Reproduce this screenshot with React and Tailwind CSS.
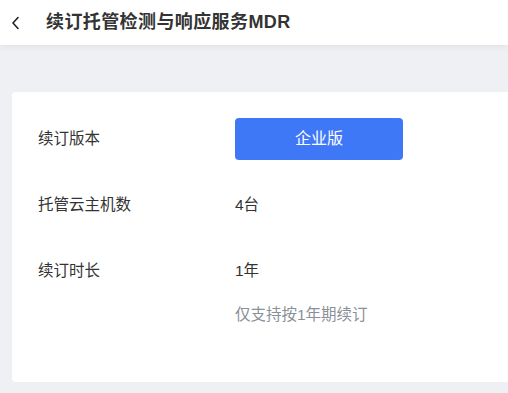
import React from "react";

const App = () => {
    const font = { fontFamily: '"Liberation Sans", "Noto Sans CJK SC", sans-serif' };

    return (
        <div className="w-[508px] h-[393px] bg-[#eef0f4] overflow-hidden" style={font}>
            <div className="h-[45px] bg-white flex items-center shadow-[0_2px_6px_rgba(0,0,0,0.06)] relative z-10">
                <svg className="ml-[10px] w-[12px] h-[14px]" viewBox="0 0 12 14" fill="none">
                    <path d="M8 1.5L3 7l5 5.5" stroke="#222" strokeWidth="1.6" strokeLinecap="round" strokeLinejoin="round" />
                </svg>
                <div className="ml-[24px] text-[18px] font-bold text-[#333] tracking-[0.4px]">续订托管检测与响应服务MDR</div>
            </div>
            <div className="ml-[12px] mt-[47px] bg-white rounded-l-[4px] pt-[26px] pb-[57px] pl-[26px]">
                <div className="flex flex-col gap-[24px]">
                    <div className="flex items-center h-[42px]">
                        <div className="w-[197px] text-[15.5px] text-[#333]">续订版本</div>
                        <button className="w-[168px] h-[42px] rounded-[4px] bg-[#3f78f6] text-white text-[16px]">企业版</button>
                    </div>
                    <div className="flex items-center h-[42px]">
                        <div className="w-[197px] text-[15.5px] text-[#333]">托管云主机数</div>
                        <div className="text-[15.5px] text-[#333]">4台</div>
                    </div>
                    <div className="flex items-center h-[42px]">
                        <div className="w-[197px] text-[15.5px] text-[#333]">续订时长</div>
                        <div className="text-[15.5px] text-[#333]">1年</div>
                    </div>
                </div>
                <div className="mt-[13px] pl-[197px] text-[15.5px] leading-[20px] text-[#8a8f99]">仅支持按1年期续订</div>
            </div>
        </div>
    );
};

export default App;
